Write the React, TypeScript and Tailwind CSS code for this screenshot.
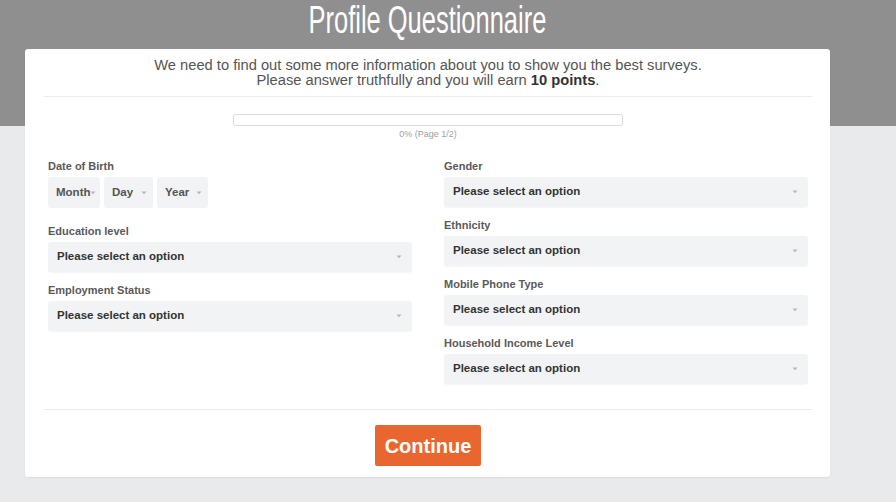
import React from "react";

const font = { fontFamily: '"Liberation Sans", Arial, sans-serif' };

function Chevron() {
  return (
    <svg width="6" height="4" viewBox="0 0 6 4" className="shrink-0">
      <path d="M0.5 0.5 L3 3.2 L5.5 0.5 Z" fill="#b4b6b8" />
    </svg>
  );
}

function Select({ className = "" }: { className?: string }) {
  return (
    <div
      className={`flex h-[30px] items-center justify-between rounded-[3px] bg-[#f1f3f4] pl-[9px] pr-[10px] shadow-[0_1px_1px_rgba(0,0,0,0.04)] ${className}`}
    >
      <span className="text-[11.5px] font-bold text-[#333]">Please select an option</span>
      <Chevron />
    </div>
  );
}

function Field({ label, last = false }: { label: string; last?: boolean }) {
  return (
    <div className={last ? "" : "mb-[11px]"}>
      <div className="h-[14px] text-[11px] font-bold leading-[14px] text-[#5a5a5a]">{label}</div>
      <Select className="mt-[4px]" />
    </div>
  );
}

function SmallSelect({ text, w }: { text: string; w: string }) {
  return (
    <div
      className={`flex h-[31px] items-center justify-between rounded-[3px] bg-[#f1f3f4] pl-[8px] pr-[6px] ${w}`}
    >
      <span className="text-[11.5px] font-bold text-[#555]">{text}</span>
      <Chevron />
    </div>
  );
}

export default function App() {
  return (
    <div
      style={font}
      className="min-h-[502px] w-full bg-[linear-gradient(to_bottom,#8f8f90_126px,#e9eaeb_126px)]"
    >
      <div className="ml-[25px] w-[805px]">
        <div className="flex h-[49px] justify-center">
          <span className="inline-block scale-x-[0.67] whitespace-nowrap text-[38px] leading-[40px] text-white">
            Profile Questionnaire
          </span>
        </div>
        <div className="rounded-[3px] bg-white px-[18px] pb-[11px] pl-[19px] pt-[9px] shadow-[0_1px_2px_rgba(0,0,0,0.06)]">
          <p className="text-center text-[14.7px] leading-[15px] text-[#555]">
            We need to find out some more information about you to show you the best surveys.
            <br />
            Please answer truthfully and you will earn <b className="text-[#333]">10 points</b>.
          </p>
          <div className="mt-[8px] h-px bg-[#ececec]" />
          <div className="mt-[17px] flex flex-col items-center">
            <div className="h-[12px] w-[390px] rounded-[2px] border border-[#dcdcdc] bg-white" />
            <div className="mt-[3px] text-[9px] leading-[10px] text-[#a0a0a0]">0% (Page 1/2)</div>
          </div>
          <div className="mt-[20px] grid grid-cols-2 gap-x-[32px] px-[4px]">
            <div>
              <div className="h-[14px] text-[11px] font-bold leading-[14px] text-[#5a5a5a]">Date of Birth</div>
              <div className="mt-[4px] mb-[16px] flex gap-[4px]">
                <SmallSelect text="Month" w="w-[52px]" />
                <SmallSelect text="Day" w="w-[49px]" />
                <SmallSelect text="Year" w="w-[51px]" />
              </div>
              <Field label="Education level" />
              <Field label="Employment Status" last />
            </div>
            <div>
              <Field label="Gender" />
              <Field label="Ethnicity" />
              <Field label="Mobile Phone Type" />
              <Field label="Household Income Level" last />
            </div>
          </div>
          <div className="mt-[25px] h-px bg-[#ececec]" />
          <div className="mt-[15px] flex justify-center">
            <button className="h-[41px] w-[106px] rounded-[2px] bg-[#ea6630] text-[20px] font-bold text-white">
              Continue
            </button>
          </div>
        </div>
      </div>
    </div>
  );
}
